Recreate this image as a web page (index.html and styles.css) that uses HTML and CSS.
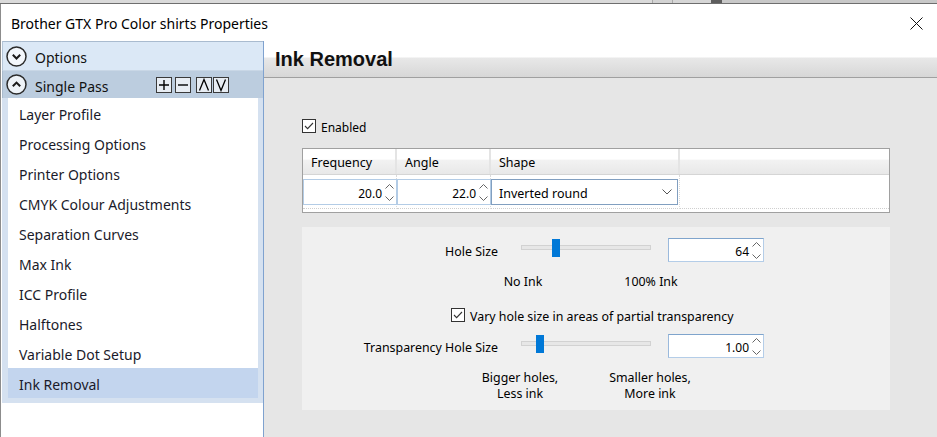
FILE: index.html
```html
<!DOCTYPE html>
<html lang="en">
<head>
    <meta charset="UTF-8">
    <meta name="viewport" content="width=device-width, initial-scale=1.0">
    <title>Brother GTX Pro Color shirts Properties</title>
    <link rel="stylesheet" href="styles.css">
</head>
<body>
    <!-- Strip of the window behind the dialog -->
    <div class="desktop-strip">
        <span class="seg seg-wide"></span>
        <span class="seg seg-a"></span>
        <span class="seg seg-b"></span>
        <span class="seg seg-dark"></span>
        <span class="seg seg-rest"></span>
    </div>

    <div class="dialog">
        <div class="titlebar">
            <span class="title">Brother GTX Pro Color shirts Properties</span>
            <svg class="close-btn" width="13" height="13" viewBox="0 0 13 13">
                <path d="M0.5 0.5 L12.5 12.5 M12.5 0.5 L0.5 12.5" stroke="#111" stroke-width="1" fill="none"/>
            </svg>
        </div>

        <div class="client">
            <!-- Left navigation -->
            <div class="nav">
                <div class="group-head group-options">
                    <svg class="toggle" width="21" height="21" viewBox="0 0 21 21">
                        <circle cx="10.5" cy="10.5" r="9.5" fill="#f3f7fc" stroke="#2b2b2b" stroke-width="1.5"/>
                        <path d="M6.8 8.8 L10.5 12.5 L14.2 8.8" fill="none" stroke="#1a1a1a" stroke-width="2"/>
                    </svg>
                    <span class="group-name">Options</span>
                </div>
                <div class="group-head group-pass">
                    <svg class="toggle" width="21" height="21" viewBox="0 0 21 21">
                        <circle cx="10.5" cy="10.5" r="9.5" fill="#eef3f8" stroke="#2b2b2b" stroke-width="1.5"/>
                        <path d="M6.8 12.3 L10.5 8.6 L14.2 12.3" fill="none" stroke="#1a1a1a" stroke-width="2"/>
                    </svg>
                    <span class="group-name">Single Pass</span>
                    <div class="tools">
                        <span class="tool"><svg width="14" height="14" viewBox="0 0 14 14"><path d="M2 7 H12 M7 2 V12" stroke="#000" stroke-width="1.4"/></svg></span>
                        <span class="tool tool-gap"><svg width="14" height="14" viewBox="0 0 14 14"><path d="M2 7 H12" stroke="#000" stroke-width="1.4"/></svg></span>
                        <span class="tool tool-pair"><svg width="14" height="14" viewBox="0 0 14 14"><path d="M2.5 12.5 L7 1.5 L11.5 12.5" fill="none" stroke="#000" stroke-width="1.3"/></svg></span>
                        <span class="tool"><svg width="14" height="14" viewBox="0 0 14 14"><path d="M2.5 1.5 L7 12.5 L11.5 1.5" fill="none" stroke="#000" stroke-width="1.3"/></svg></span>
                    </div>
                </div>
                <div class="list-frame">
                    <ul class="page-list">
                        <li>Layer Profile</li>
                        <li>Processing Options</li>
                        <li>Printer Options</li>
                        <li>CMYK Colour Adjustments</li>
                        <li>Separation Curves</li>
                        <li>Max Ink</li>
                        <li>ICC Profile</li>
                        <li>Halftones</li>
                        <li>Variable Dot Setup</li>
                        <li class="selected">Ink Removal</li>
                    </ul>
                </div>
            </div>

            <!-- Ink Removal page -->
            <div class="page">
                <div class="page-head">Ink Removal</div>
                <div class="page-body">
                    <div class="check-row enabled-row">
                        <span class="checkbox">
                            <svg width="12" height="12" viewBox="0 0 12 12"><path d="M2 6 L4.6 8.6 L10 3" fill="none" stroke="#333" stroke-width="1.1"/></svg>
                        </span>
                        <span class="check-text">Enabled</span>
                    </div>

                    <div class="screen-grid">
                        <div class="grid-head">
                            <div class="col col-freq">Frequency</div>
                            <div class="col col-angle">Angle</div>
                            <div class="col col-shape">Shape</div>
                            <div class="col col-fill"></div>
                        </div>
                        <div class="grid-row">
                            <div class="cell col-freq">
                                <div class="spin-input">
                                    <span class="value">20.0</span>
                                    <svg class="arrows" width="9" height="17" viewBox="0 0 9 17"><path d="M0.5 4.5 L4.5 0.5 L8.5 4.5 M0.5 12.5 L4.5 16.5 L8.5 12.5" fill="none" stroke="#666" stroke-width="1"/></svg>
                                </div>
                            </div>
                            <div class="cell col-angle">
                                <div class="spin-input">
                                    <span class="value">22.0</span>
                                    <svg class="arrows" width="9" height="17" viewBox="0 0 9 17"><path d="M0.5 4.5 L4.5 0.5 L8.5 4.5 M0.5 12.5 L4.5 16.5 L8.5 12.5" fill="none" stroke="#666" stroke-width="1"/></svg>
                                </div>
                            </div>
                            <div class="cell col-shape">
                                <div class="combo">
                                    <span class="value">Inverted round</span>
                                    <svg width="10" height="6" viewBox="0 0 10 6"><path d="M0.5 0.5 L5 5 L9.5 0.5" fill="none" stroke="#555" stroke-width="1"/></svg>
                                </div>
                            </div>
                            <div class="cell col-fill"></div>
                        </div>
                    </div>

                    <div class="hole-panel">
                        <div class="slider-row">
                            <span class="field-label">Hole Size</span>
                            <div class="slider">
                                <span class="track"></span>
                                <span class="thumb" style="left: 31px"></span>
                            </div>
                            <div class="spin-box">
                                <span class="value">64</span>
                                <svg class="arrows" width="9" height="17" viewBox="0 0 9 17"><path d="M0.5 4.5 L4.5 0.5 L8.5 4.5 M0.5 12.5 L4.5 16.5 L8.5 12.5" fill="none" stroke="#666" stroke-width="1"/></svg>
                            </div>
                        </div>

                        <div class="scale-row scale-ink">
                            <span>No Ink</span>
                            <span>100% Ink</span>
                        </div>

                        <div class="check-row vary-row">
                            <span class="checkbox">
                                <svg width="12" height="12" viewBox="0 0 12 12"><path d="M2 6 L4.6 8.6 L10 3" fill="none" stroke="#333" stroke-width="1.1"/></svg>
                            </span>
                            <span class="check-text">Vary hole size in areas of partial transparency</span>
                        </div>

                        <div class="slider-row">
                            <span class="field-label">Transparency Hole Size</span>
                            <div class="slider">
                                <span class="track"></span>
                                <span class="thumb" style="left: 15px"></span>
                            </div>
                            <div class="spin-box">
                                <span class="value">1.00</span>
                                <svg class="arrows" width="9" height="17" viewBox="0 0 9 17"><path d="M0.5 4.5 L4.5 0.5 L8.5 4.5 M0.5 12.5 L4.5 16.5 L8.5 12.5" fill="none" stroke="#666" stroke-width="1"/></svg>
                            </div>
                        </div>

                        <div class="scale-row scale-holes">
                            <span>Bigger holes,<br>Less ink</span>
                            <span>Smaller holes,<br>More ink</span>
                        </div>
                    </div>
                </div>
            </div>
        </div>
    </div>
</body>
</html>
```

FILE: styles.css
```css
/* General */
* {
    box-sizing: border-box;
}

body {
    margin: 0;
    width: 937px;
    height: 437px;
    overflow: hidden;
    background: #fff;
    font-family: "Noto Sans", sans-serif;
    color: #111;
}

/* Window behind the dialog */
.desktop-strip {
    display: flex;
    height: 4px;
    border-bottom: 1px solid #6e6e6e;
}

.seg {
    display: block;
    height: 100%;
}

.seg-wide { width: 653px; background: #dadada; border-right: 1px solid #a9a9a9; }
.seg-a { width: 20px; background: #d3d3d3; border-right: 1px solid #a9a9a9; }
.seg-b { width: 38px; background: #d6d6d6; }
.seg-dark { width: 11px; background: #5e5e5e; }
.seg-rest { flex: 1; background: #c8c8c8; }

/* Dialog frame */
.dialog {
    height: 433px;
    border-left: 1px solid #8c8c8c;
    display: flex;
    flex-direction: column;
}

.titlebar {
    height: 37px;
    flex-shrink: 0;
    display: flex;
    align-items: center;
    justify-content: space-between;
    padding: 1px 14px 0 10px;
    font-size: 14px;
    color: #000;
}

.close-btn {
    display: block;
}

.client {
    flex: 1;
    display: flex;
    min-height: 0;
}

/* Navigation column */
.nav {
    width: 263px;
    flex-shrink: 0;
    border-right: 1px solid #7fa2cf;
    background: #fff;
}

.group-head {
    display: flex;
    align-items: center;
    margin-left: 1px;
    padding-left: 3px;
    font-size: 14px;
    color: #111;
}

.group-head .toggle {
    display: block;
    margin-right: 8px;
}

.group-name {
    padding-top: 2px;
}

.group-options {
    height: 29px;
    background: #dbe8f6;
    border-top: 1px solid #a9bbcf;
    border-left: 1px solid #b5c6d8;
}

.group-pass {
    height: 28px;
    background: #bccddf;
    border-top: 1px solid #c9d7e6;
    border-left: 1px solid #aabbcd;
}

.group-pass .group-name {
    padding-top: 4px;
}

.tools {
    display: flex;
    margin-left: auto;
    margin-right: 33px;
}

.tool {
    width: 16px;
    height: 16px;
    border: 1px solid #3a3a3a;
    background: #e8edf3;
    display: flex;
    align-items: center;
    justify-content: center;
    margin-right: 1px;
}

.tool-gap {
    margin-left: 2px;
}

.tool-pair {
    margin-left: 4px;
}

.list-frame {
    margin-left: 1px;
    padding: 0 5px 5px 6px;
    background: #d5e1f0;
}

.page-list {
    list-style: none;
    margin: 0;
    padding: 0;
    background: #fff;
}

.page-list li {
    height: 30px;
    padding: 4px 0 0 11px;
    line-height: 26px;
    font-size: 14px;
    color: #1a1a2a;
}

.page-list li.selected {
    background: #c3d5ee;
}

/* Page area */
.page {
    flex: 1;
    display: flex;
    flex-direction: column;
    background: #e6e6e6;
}

.page-head {
    height: 37px;
    flex-shrink: 0;
    display: flex;
    align-items: center;
    padding-left: 11px;
    border-bottom: 1px solid #a0a0a0;
    background: linear-gradient(#fff 0, #fff 16px, #e8e8e8 17px, #d7d7d7 100%);
    font-family: "Liberation Sans", Arial, sans-serif;
    font-weight: bold;
    font-size: 20px;
    color: #111;
}

.page-body {
    padding: 41px 0 0 38px;
    font-size: 12px;
    color: #000;
}

/* Check boxes */
.check-row {
    display: flex;
    align-items: center;
    height: 16px;
}

.checkbox {
    width: 14px;
    height: 14px;
    flex-shrink: 0;
    border: 1px solid #333;
    background: #fff;
    display: flex;
    align-items: center;
    justify-content: center;
    margin-right: 5px;
}

.check-text {
    padding-top: 2px;
}

.enabled-row {
    height: 14px;
}

/* Screen grid */
.screen-grid {
    width: 588px;
    margin-top: 15px;
    border: 1px solid #a0a0a0;
    background: #fff;
}

.grid-head {
    display: flex;
    height: 26px;
    border-bottom: 1px solid #d5d5d5;
    background: linear-gradient(#fff 0, #fff 40%, #f2f2f2 45%, #e8e8e8 100%);
}

.grid-head .col {
    padding: 3px 0 0 8px;
    line-height: 22px;
    font-size: 12.5px;
    border-right: 2px solid #e4e4e4;
}

.grid-head .col-fill {
    border-right: none;
}

.col-freq { width: 94px; }
.col-angle { width: 94px; }
.col-shape { width: 189px; }
.col-fill { flex: 1; }

.grid-row {
    display: flex;
    height: 37px;
}

.cell {
    height: 34px;
    padding-top: 4px;
    border-bottom: 1px dotted #cfcfcf;
    border-right: 1px dotted #dadada;
}

.cell.col-fill {
    border-right: none;
}

.spin-input,
.spin-box {
    display: flex;
    align-items: center;
    justify-content: flex-end;
    background: #fff;
}

.value {
    padding-top: 2px;
}

.spin-input {
    height: 26px;
    margin-right: -1px;
    padding-right: 2px;
    border: 1px solid #b3cce6;
    font-size: 12px;
}

.arrows {
    display: block;
    margin-left: 3px;
}

.combo {
    height: 26px;
    margin-right: 1px;
    display: flex;
    align-items: center;
    justify-content: space-between;
    padding: 0 5px 0 7px;
    border: 1px solid #819fc0;
    font-size: 12.5px;
}

.combo svg {
    display: block;
}

/* Hole size panel */
.hole-panel {
    width: 588px;
    height: 183px;
    margin-top: 14px;
    padding-top: 11px;
    background: #f0f0f0;
    font-size: 12.4px;
}

.slider-row {
    display: flex;
    align-items: center;
    height: 24px;
}

.slider-row + .scale-row {
    margin-top: 12px;
}

.check-row + .slider-row {
    margin-top: 11px;
}

.field-label {
    width: 196px;
    padding-top: 2px;
    text-align: right;
    white-space: nowrap;
}

.slider {
    position: relative;
    align-self: flex-start;
    width: 130px;
    height: 18px;
    margin: 1px 0 0 23px;
}

.track {
    display: block;
    height: 5px;
    margin-top: 6px;
    background: #e7e7e7;
    border: 1px solid #d2d2d2;
}

.thumb {
    position: absolute;
    top: 0;
    width: 8px;
    height: 18px;
    background: #0078d7;
}

.spin-box {
    width: 96px;
    height: 24px;
    margin-left: 17px;
    padding-right: 2px;
    border: 1px solid #b4cde8;
    border-top-color: #7fa4cc;
    border-left-color: #9ab9dc;
    font-size: 12px;
}

.scale-row {
    display: flex;
    line-height: 16px;
}

.scale-row span {
    width: 100px;
    text-align: center;
}

.scale-ink {
    padding-left: 171px;
    gap: 28px;
}

.vary-row {
    margin-top: 17px;
    padding-left: 149px;
}

.scale-holes {
    margin-top: 8px;
    padding-left: 168px;
    gap: 30px;
}
```
